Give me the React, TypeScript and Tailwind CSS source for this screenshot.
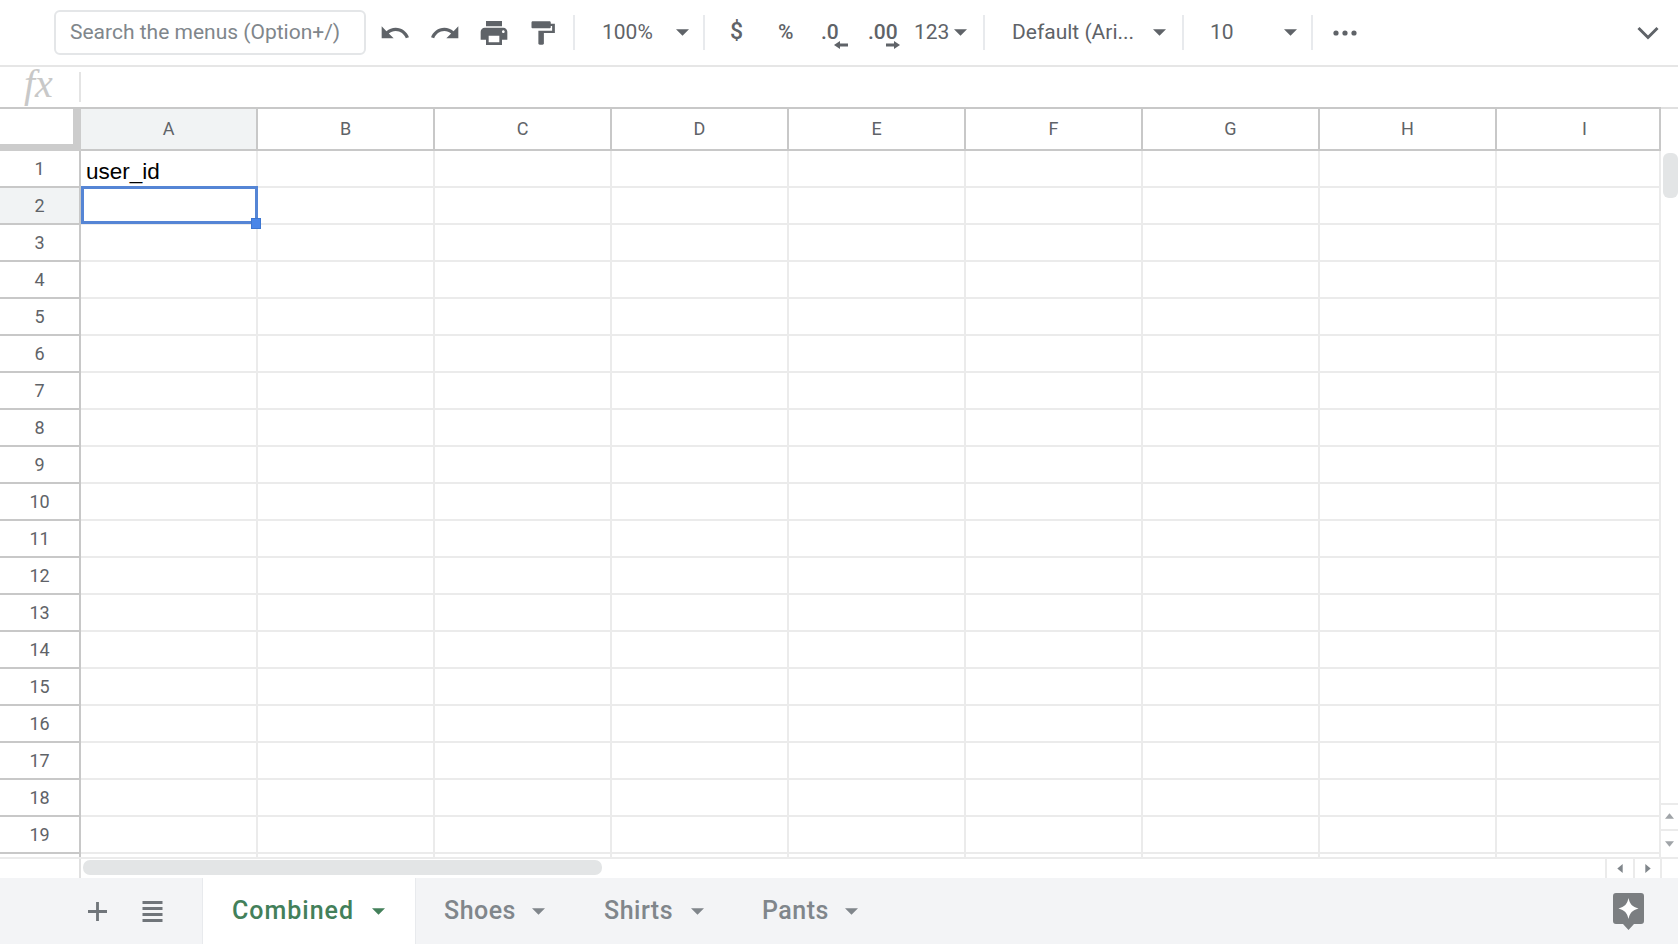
import { clsx } from 'clsx';

const COLUMNS = ['A', 'B', 'C', 'D', 'E', 'F', 'G', 'H', 'I'];
const ROWS = Array.from({ length: 19 }, (_, i) => i + 1);

function Caret({ className, color = '#5f6368' }: { className?: string; color?: string }) {
  return (
    <svg viewBox="0 0 14 7" className={clsx('w-[13px] h-[7px] shrink-0', className)}>
      <path d="M0 0h14L7 7z" fill={color} />
    </svg>
  );
}

function Icon({ d, className }: { d: string; className?: string }) {
  return (
    <svg viewBox="0 0 24 24" preserveAspectRatio="none" className={clsx('shrink-0', className)} fill="#5f6368">
      <path d={d} />
    </svg>
  );
}

function Divider({ className }: { className?: string }) {
  return <div className={clsx('w-[2px] h-[35px] bg-[#e8eaed] shrink-0', className)} />;
}

function Toolbar() {
  return (
    <div className="flex items-center h-[67px] border-b-2 border-[#e6e6e6] text-[#5f6368] text-[21px] shrink-0">
      <div className="ml-[54px] w-[312px] h-[45px] flex items-center pl-[14px] border-2 border-[#e4e6e8] rounded-[6px] text-[#80868b] shrink-0 whitespace-nowrap">
        Search the menus (Option+/)
      </div>
      <Icon
        className="ml-[13px] w-[32px] h-[32px]"
        d="M12.5 8c-2.65 0-5.05.99-6.9 2.6L2 7v9h9l-3.62-3.62c1.39-1.16 3.16-1.88 5.12-1.88 3.54 0 6.55 2.31 7.6 5.5l2.37-.78C21.08 11.03 17.15 8 12.5 8z"
      />
      <Icon
        className="ml-[18px] w-[32px] h-[32px]"
        d="M18.4 10.6C16.55 8.99 14.15 8 11.5 8c-4.65 0-8.58 3.03-9.96 7.22L3.9 16c1.05-3.19 4.05-5.5 7.6-5.5 1.95 0 3.73.72 5.12 1.88L13 16h9V7l-3.6 3.6z"
      />
      <Icon
        className="ml-[17px] w-[32px] h-[32px]"
        d="M19 8H5c-1.66 0-3 1.34-3 3v6h4v4h12v-4h4v-6c0-1.66-1.34-3-3-3zm-3 11H8v-5h8v5zm3-7c-.55 0-1-.45-1-1s.45-1 1-1 1 .45 1 1-.45 1-1 1zm-1-9H6v4h12V3z"
      />
      <Icon
        className="ml-[16px] w-[33px] h-[28px]"
        d="M18 4V3c0-.55-.45-1-1-1H5c-.55 0-1 .45-1 1v4c0 .55.45 1 1 1h12c.55 0 1-.45 1-1V6h1v4H9v11c0 .55.45 1 1 1h2c.55 0 1-.45 1-1v-9h8V4h-3z"
      />
      <Divider className="ml-[14px]" />
      <span className="ml-[27px] w-[50px]">100%</span>
      <Caret className="ml-[24px]" />
      <Divider className="ml-[14px]" />
      <span className="ml-[25px] w-[13px] text-[23px] font-medium">$</span>
      <span className="ml-[35px] w-[17px] font-medium">%</span>
      <div className="ml-[26px] w-[28px] relative">
        <span className="font-medium">.0</span>
        <svg viewBox="0 0 14 8" className="absolute left-[13px] top-[24px] w-[14px] h-[8px]" fill="#5f6368">
          <path d="M0 4l6-4v2.500h8v3H6V8z" />
        </svg>
      </div>
      <div className="ml-[19px] w-[34px] relative">
        <span className="font-medium">.00</span>
        <svg viewBox="0 0 14 8" className="absolute left-[18px] top-[24px] w-[14px] h-[8px]" fill="#5f6368">
          <path d="M14 4L8 0v2.500H0v3h8V8z" />
        </svg>
      </div>
      <span className="ml-[12px] w-[37px]">123</span>
      <Caret className="ml-[3px]" />
      <Divider className="ml-[16px]" />
      <span className="ml-[27px] w-[122px] whitespace-nowrap">Default (Ari...</span>
      <Caret className="ml-[19px]" />
      <Divider className="ml-[16px]" />
      <span className="ml-[26px] w-[24px]">10</span>
      <Caret className="ml-[50px]" />
      <Divider className="ml-[14px]" />
      <svg viewBox="0 0 24 6" className="ml-[20px] w-[24px] h-[6px]" fill="#5f6368">
        <circle cx="3" cy="3" r="2.6" />
        <circle cx="12" cy="3" r="2.6" />
        <circle cx="21" cy="3" r="2.6" />
      </svg>
      <svg viewBox="0 0 22 14" className="ml-[280px] w-[22px] h-[14px]" fill="none" stroke="#5f6368" strokeWidth="3">
        <path d="M1.5 2L11 11.5 20.5 2" />
      </svg>
    </div>
  );
}

function FormulaBar() {
  return (
    <div className="flex items-center h-[40px] shrink-0">
      <span className="ml-[24px] w-[55px] pb-[6px] text-[40px] italic text-[#c8c8c8] font-['Liberation_Serif',serif] leading-none">
        fx
      </span>
      <div className="w-[2px] h-[30px] bg-[#e4e4e4]" />
    </div>
  );
}

function SheetGrid() {
  return (
    <div className="grid grid-cols-[81px_repeat(8,177px)_164px] grid-rows-[44px_repeat(19,37px)_3px] w-[1661px]">
      <div className="relative border-t-2 border-[#c8c8c8] bg-white">
        <div className="absolute right-0 top-0 w-[8px] h-full bg-[#cccccc]" />
        <div className="absolute left-0 bottom-0 w-full h-[7px] bg-[#cccccc]" />
      </div>
      {COLUMNS.map((col) => (
        <div
          key={col}
          className={clsx(
            'flex items-center justify-center pb-[1px] border-t-2 border-b-2 border-r-2 border-[#c8c8c8] text-[#5f6368] text-[18px]',
            col === 'A' && 'bg-[#f1f3f4]',
            col === 'I' && 'pl-[13px]',
          )}
        >
          {col}
        </div>
      ))}
      {ROWS.map((row) => (
        <div key={row} className="contents">
          <div
            className={clsx(
              'flex items-center justify-center border-r-2 border-b-2 border-[#c8c8c8] text-[#5f6368] text-[18px]',
              row === 2 && 'bg-[#f1f3f4]',
            )}
          >
            {row}
          </div>
          {COLUMNS.map((col) => (
            <div
              key={col}
              className="relative flex items-center border-r-2 border-b-2 border-[#ebebeb] text-black text-[22.5px] font-['Liberation_Sans',sans-serif]"
            >
              {row === 1 && col === 'A' && <span className="pl-[5px] pt-[7px]">user_id</span>}
              {row === 2 && col === 'A' && (
                <>
                  <div className="absolute z-10 left-0 top-[-2px] w-[177px] h-[38px] border-[3px] border-[#5585d5]" />
                  <div className="absolute z-10 right-[-5px] bottom-[-6px] w-[10px] h-[11px] bg-[#4a86e8] border border-[#3d76d0]" />
                </>
              )}
            </div>
          ))}
        </div>
      ))}
      <div className="border-r-2 border-[#c8c8c8]" />
      {COLUMNS.map((col) => (
        <div key={col} className="border-r-2 border-[#ebebeb]" />
      ))}
    </div>
  );
}

function VerticalScroll() {
  return (
    <div className="flex-1 flex flex-col border-t-2 border-[#e0e0e0]">
      <div className="relative flex-1">
        <div className="absolute left-[2px] top-[44px] w-[15px] h-[45px] rounded-[6px] bg-[#e3e5e6]" />
      </div>
      <div className="flex items-center justify-center pb-[2px] h-[28px] border-t-2 border-b-2 border-[#ebebeb]">
        <svg viewBox="0 0 10 6" className="w-[9px] h-[6px]" fill="#a0a4a8">
          <path d="M5 0l5 6H0z" />
        </svg>
      </div>
      <div className="flex items-center justify-center h-[26px]">
        <svg viewBox="0 0 10 6" className="w-[9px] h-[6px]" fill="#a0a4a8">
          <path d="M0 0h10L5 6z" />
        </svg>
      </div>
    </div>
  );
}

function HorizontalScroll() {
  return (
    <div className="flex items-center h-[21px] border-t-2 border-[#ebebeb] shrink-0">
      <div className="w-[81px] h-full border-r-2 border-[#e0e0e0]" />
      <div className="ml-[2px] mb-[2px] w-[519px] h-[15px] rounded-[7px] bg-[#e3e5e6]" />
      <div className="flex-1" />
      <div className="flex items-center justify-center w-[28px] h-full border-l-2 border-[#ebebeb]">
        <svg viewBox="0 0 6 10" className="w-[6px] h-[9px]" fill="#80868b">
          <path d="M6 0v10L0 5z" />
        </svg>
      </div>
      <div className="flex items-center justify-center w-[27px] h-full border-l-2 border-[#ebebeb]">
        <svg viewBox="0 0 6 10" className="w-[6px] h-[9px]" fill="#80868b">
          <path d="M0 0v10l6-5z" />
        </svg>
      </div>
      <div className="w-[18px] h-full border-l-2 border-[#ebebeb]" />
    </div>
  );
}

function TabBar() {
  return (
    <div className="flex items-center flex-1 bg-[#f3f4f6] text-[#80868b] text-[25px] font-medium tracking-[0.5px]">
      <svg viewBox="0 0 20 20" className="ml-[88px] w-[19px] h-[19px]" fill="#70757a">
        <path d="M8.5 0h3v8.5H20v3h-8.5V20h-3v-8.5H0v-3h8.5z" />
      </svg>
      <svg viewBox="0 0 20 21" className="ml-[35px] w-[21px] h-[21px]" fill="#70757a">
        <path d="M0 0h20v3H0zM0 6h20v3H0zM0 12h20v3H0zM0 18h20v3H0z" />
      </svg>
      <div className="ml-[39px] w-[214px] h-full flex items-center bg-white border-x border-[#e8eaed] text-[#43805a] tracking-[1px]">
        <span className="ml-[29px] w-[123px] whitespace-nowrap">Combined</span>
        <Caret className="ml-[17px]" color="#43805a" />
      </div>
      <span className="ml-[28px] w-[72px]">Shoes</span>
      <Caret className="ml-[16px]" color="#80868b" />
      <span className="ml-[59px] w-[71px]">Shirts</span>
      <Caret className="ml-[16px]" color="#80868b" />
      <span className="ml-[58px] w-[66px]">Pants</span>
      <Caret className="ml-[17px]" color="#80868b" />
      <svg viewBox="0 0 31 37" className="ml-[755px] w-[31px] h-[37px]">
        <path d="M3 0h25a3 3 0 013 3v25a3 3 0 01-3 3h-7l-5.500 6-5.500-6H3a3 3 0 01-3-3V3a3 3 0 013-3z" fill="#7b7e81" />
        <path d="M15.500 5c1.200 6 4 9 10 10.500-6 1.500-8.800 4.500-10 10.500-1.200-6-4-9-10-10.500 6-1.500 8.800-4.500 10-10.500z" fill="#fff" />
      </svg>
    </div>
  );
}

export default function App() {
  return (
    <div className="flex flex-col w-[1678px] h-[944px] overflow-hidden bg-white font-['Roboto',sans-serif]">
      <Toolbar />
      <FormulaBar />
      <div className="flex shrink-0">
        <SheetGrid />
        <VerticalScroll />
      </div>
      <HorizontalScroll />
      <TabBar />
    </div>
  );
}
